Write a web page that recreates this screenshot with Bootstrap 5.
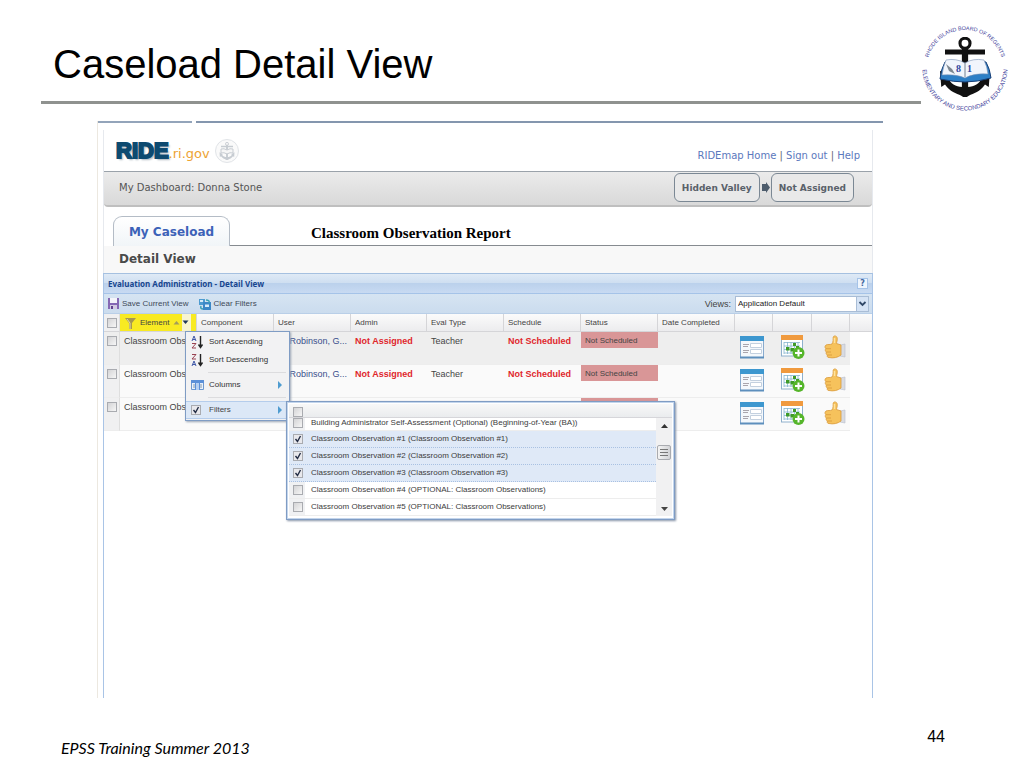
<!DOCTYPE html>
<html lang="en">
<head>
<meta charset="utf-8">
<meta name="viewport" content="width=device-width, initial-scale=1">
<title>Caseload Detail View</title>
<link href="https://cdn.jsdelivr.net/npm/bootstrap@5.3.0/dist/css/bootstrap.min.css" rel="stylesheet">
<style>
body { background:#fff; color:#000; font-family:"Liberation Sans",Arial,sans-serif; }
.slide { min-height:100vh; }
.slide-head { padding:0 16px 0 41px; height:121px; }
.slide-title { font-size:40px; line-height:48px; margin:0; padding:40px 0 13px 12px; border-bottom:3px solid #8f928f; height:104px; }
.seal { width:88px; height:88px; margin:24px -1px 0 0; flex:none; }
.shot { margin:0 141px 0 97px; border-left:1px solid #ece8e0; min-height:577px; }
.shot-line { height:2px; background:linear-gradient(90deg,#93a4ba 94px,#fff 94px 98px,#8496ae 98px); }
.app { margin:7px 10px 0 5px; border:1px solid #e6e9ee; border-top:0; border-bottom:0; font-family:"DejaVu Sans",Verdana,sans-serif; }
.app-head { height:42px; padding:0 12px; border-bottom:1px solid #9aa2aa; }
.brand-main { font:bold 22px/34px "Liberation Sans",sans-serif; color:#0d4a70; -webkit-text-stroke:2px #0d4a70; text-shadow:2px 2px 2px #aab4bc; }
.brand-sub { font-size:13px; line-height:16px; color:#eda333; }
.top-links { font-size:10px; line-height:14px; color:#667; }
.top-links a { color:#5b78bd; text-decoration:none; }
.userbar { height:35px; padding:0 18px 2px 15px; background:linear-gradient(#ebebeb,#d9d9d9); border-bottom:2px solid #bfbfbf; border-radius:0 0 4px 4px; font-size:10px; color:#555; }
.crumb { font:bold 9px/12px "DejaVu Sans",sans-serif; color:#59616a; background:#e9e9e9; border:1px solid #7b8894; border-radius:6px; height:29px; padding:0 7px; }
.tabs-row { height:39px; padding:9px 0 0 9px; }
.tab-on { height:30px; width:117px; font:bold 12px/14px "DejaVu Sans",sans-serif; color:#3c62b8; background:linear-gradient(#fff,#f1f5f8); border:1px solid #b4bcc6; border-bottom:0; border-radius:9px 9px 0 0; }
.tabs-fill { border-bottom:1px solid #868b90; }
.report-title { font:bold 15px/18px "Liberation Serif",serif; color:#000; margin:0; padding-left:81px; padding-top:8px; }
.section-title { font-size:12px; line-height:27px; font-weight:bold; color:#4a4a4a; background:#f8f8f8; margin:0; padding-left:15px; }
.panel { border-top:1px solid #a5c0e0; border-left:1px solid #a9c4e6; border-right:1px solid #a9c4e6; margin:0 -1px; min-height:425px; font:9px/10px "Liberation Sans",Arial,sans-serif; color:#444; }
.panel-title { height:20px; padding:0 4px; background:linear-gradient(#dfeaf6,#cfdff1 45%,#bbd1ec 50%,#c8daf2); border-bottom:1px solid #a5c3e8; font-size:8px; font-weight:bold; color:#17468f; font-family:"Noto Sans",sans-serif; }
.help-btn { width:11px; height:11px; border:1px solid #a5c3e8; background:#eef5fd; color:#44689f; font:bold 8px/9px "DejaVu Sans",sans-serif; padding:0; }
.tools { height:20px; padding:0 3px 0 4px; background:linear-gradient(#d6e4f2,#cbdcee); border-bottom:1px solid #b9cfe8; }
.tool-btn { border:0; background:none; padding:0; color:#3f4a58; font-size:8px; line-height:10px; gap:3px; }
.tool-btn + .tool-btn { margin-left:10px; }
.view-pick { appearance:none; width:134px; height:16px; border:1px solid #a9bdd6; border-radius:0; color:#222; padding:0 14px 0 2px; font-size:8px; line-height:12px;
 background:#fff url("data:image/svg+xml,%3Csvg xmlns='http://www.w3.org/2000/svg' width='12' height='14'%3E%3Crect width='12' height='14' fill='%23d5e3f5'/%3E%3Cpath d='M.5 0v14' stroke='%23a9bdd6'/%3E%3Cpath d='M3.500 5l3 3 3-3' fill='none' stroke='%23304868' stroke-width='1.800'/%3E%3C/svg%3E") right center no-repeat; }
.grid { width:100%; table-layout:fixed; border-collapse:separate; border-spacing:0; }
.grid th { height:18px; padding:0 0 0 4px; font-size:8px; font-weight:normal; white-space:nowrap; background:linear-gradient(#fbfbfb,#ececee); border-right:1px solid #d5d5d8; border-bottom:1px solid #d5d5d8; }
.grid td { height:33px; padding:4px 0 0 4px; vertical-align:top; white-space:nowrap; background:#fafafa; border-bottom:1px solid #ededed; overflow:hidden; }
.grid tr.row-on td { background:#eee; }
.grid tr td.blank { background:#fff; border-color:#fff; }
.grid th.pick, .grid td.pick { padding:4px 0 0 3px; background:#f0f0f1; vertical-align:top; border-right:1px solid #dedede; }
.grid th.sorted { background:linear-gradient(90deg,#f8ea22 62px,#f7f4d0 62px 71px,#f8ea22 71px); padding:0 3px 0 5px; }
.grid td.glyph { padding:3px 0 0 5px; }
.grid a { color:#3a4f8c; text-decoration:none; }
.warn { color:#e0262c; font-weight:bold; }
.flag { background:#d99697; margin:-4px 0 0 -4px; padding:4px 0 2px 4px; height:16px; font-size:8px; }
.tick { appearance:none; display:block; flex:none; width:10px; height:10px; margin:0; border:1px solid #a9abb0; background:linear-gradient(135deg,#d4d4d6,#f6f6f6); }
.tick:checked { background:#e8e8ec url("data:image/svg+xml,%3Csvg xmlns='http://www.w3.org/2000/svg' width='8' height='8'%3E%3Cpath d='M1.500 4l2 2.500L6.500 1' fill='none' stroke='%23222c44' stroke-width='1.400'/%3E%3C/svg%3E") center no-repeat; }
.col-menu { position:absolute; left:81px; top:17px; width:105px; height:90px; border:1px solid #7f9cc4; background:#f2f2f3; box-shadow:1px 1px 2px #9aa5b5; padding:1px 0; z-index:2; font-size:8px; }
.col-menu button { display:flex; align-items:center; width:100%; border:0; background:none; padding:0 7px 0 5px; gap:5px; color:#333; font-size:8px; line-height:10px; height:18px; text-align:left; }
.col-menu .split { height:1px; background:#dcdcde; margin:3px 3px 3px 22px; }
.col-menu .hot { display:flex; align-items:center; gap:8px; background:#dce8f7; height:18px; padding:0 7px 0 5px; border-top:1px solid #b5cdec; border-bottom:1px solid #b5cdec; }
.sub-menu { position:absolute; left:100px; top:69px; width:389px; height:119px; border:1px solid #7f9cc4; outline:1px solid #c3d5ec; outline-offset:-2px; background:#fff; box-shadow:1px 1px 2px #8794a8; z-index:3; padding:2px; }
.sub-head { height:14px; background:linear-gradient(#f8f8f8,#eaecee); border-bottom:1px solid #d6d6da; padding:3px 0 0 4px; }
.choice { height:17px; border-bottom:1px solid #ededed; padding-left:4px; gap:8px; color:#3c3c3c; background:linear-gradient(90deg,#f0f1f3 16px,#fff 16px); }
.choice:first-child { height:13px; align-items:start!important; }
.choice.on { background:#dfe9f7; border-bottom:1px dotted #a9c1e2; }
.bar { width:16px; background:#f1f1f2; padding:4px 0; }
.thumb { width:14px; height:15px; background:linear-gradient(90deg,#f4f4f4,#d2d3d6); border:1px solid #a9abb0; border-radius:2px; }
.slide-foot { padding:27px 79px 0 61px; }
.foot-note { font:italic 16px/24px Lato,sans-serif; padding-top:11px; }
.page-no { font-size:16px; line-height:24px; }
</style>
</head>
<body>
<svg width="0" height="0" class="d-block" aria-hidden="true">
 <symbol id="form" viewBox="0 0 24 24"><rect x=".5" y="1.500" width="23" height="21" fill="#f4f8fc" stroke="#88aace"/><rect y="1" width="24" height="5" fill="#3d97cf"/><path d="M0 22.500h24" stroke="#5d8fbd" stroke-width="2"/><path d="M3 9.500h6M3 11.500h5M3 15.500h6M3 17.500h5" stroke="#a9a5ad"/><path d="M10.500 8.500h11v4h-11zM10.500 14.500h11v4h-11z" fill="#fff" stroke="#c3d0df"/></symbol>
 <symbol id="cal" viewBox="0 0 24 24"><rect x=".5" y="1" width="21" height="20" fill="#fff" stroke="#8fb0cc"/><rect y="0" width="22" height="5" fill="#f09a3e"/><path d="M3 7v12M6.500 7v12M10 7v12M13.500 7v12M17 7v12M3 7.500h16M3 11h16M3 14.500h16M3 18h16" stroke="#87b5cf" stroke-width=".8"/><path d="M12 8h3v3h-3zM15 11h3v3h-3zM5 12h3.500v3.500H5zM9.500 13h3.500v3.500H9.500z" fill="#3f9b28"/><circle cx="17.500" cy="18" r="6" fill="#55b52a"/><path d="M17.500 14.500v7M14 18h7" stroke="#fff" stroke-width="2"/></symbol>
 <symbol id="thumb" viewBox="0 0 22 24"><path d="M16 10l5-1v13l-5-1z" fill="#d8dbe2" stroke="#b9bec9" stroke-width=".6"/><path d="M2 10c2-1 4 0 6-1 1.500-2 1-5 1.200-7 1-2 3.800-1 4 1 .3 3-.7 4-.7 5.500L17 10v10c-3 2.500-8 3.500-12 2.500-2 0-2-1.500-1.500-2.500C2 19.500 1.800 18 2.500 17 1 16.500 1 14.500 1.800 13.700.6 12.500.8 11 2 10z" fill="#f6c25c" stroke="#d9993a" stroke-width=".8"/><path d="M2 13.700h5M2.500 17H7M3.500 20H8" stroke="#d9993a" stroke-width=".8"/><path d="M10.500 3v5" stroke="#ffe3a0" stroke-width="1.500"/></symbol>
 <symbol id="anchor" viewBox="0 0 40 48"><circle cx="20" cy="5" r="4" fill="none" stroke="currentColor" stroke-width="2.500"/><path d="M4 10h32v4H4z"/><path d="M17.500 8h5v32h-5z"/><path d="M0 27l9 6-2 1c3 5 7 6 13 6s10-1 13-6l-2-1 9-6-1 13-3-2c-4 6-9 7-13 9l-3 2-3-2c-4-2-9-3-13-9l-3 2z"/></symbol>
</svg>
<main class="slide d-flex flex-column">
 <header class="slide-head d-flex">
  <h1 class="slide-title flex-grow-1 fw-normal">Caseload Detail View</h1>
  <svg class="seal" viewBox="0 0 88 88" role="img" aria-label="Rhode Island Board of Regents seal">
   <path id="arc-top" d="M6 44A38 38 0 0 1 82 44" fill="none"/>
   <path id="arc-low" d="M1.500 44A42.500 42.500 0 0 0 86.500 44" fill="none"/>
   <g font-family="Liberation Sans" fill="#40409a"><text font-size="5.400" text-anchor="middle"><textPath href="#arc-top" startOffset="50%">RHODE ISLAND BOARD OF REGENTS</textPath></text>
   <text font-size="6" text-anchor="middle"><textPath href="#arc-low" startOffset="50%">ELEMENTARY AND SECONDARY EDUCATION</textPath></text></g>
   <use href="#anchor" x="18" y="13" width="52" height="60" color="#111" fill="#111"/>
   <path d="M24 38q-4 7-5 17 14 3 25 3 12 0 26-4-1-9-5-16-12-2-20 3-9-5-21-3z" fill="#2d7fc6" stroke="#163d75"/>
   <path d="M25 36q-3 7-4 15 14-1 23 3 9-5 23-4-1-8-4-14-11-2-19 3-9-5-19-3z" fill="#f1f5fc" stroke="#7890b4" stroke-width=".6"/><path d="M44 39v14" stroke="#567" stroke-width=".8"/><path d="M25 40l6 5 3 5-6-3z" fill="#7d8791"/>
   <g font-family="Liberation Serif" font-weight="bold" font-size="10" fill="#3046a0"><text x="35" y="48">8</text><text x="46" y="48">1</text></g>
  </svg>
 </header>
 <section class="shot">
  <div class="shot-line"></div>
  <div class="app">
   <div class="app-head d-flex justify-content-between">
    <div class="d-flex"><span class="brand-main pt-1">RIDE</span><span class="brand-sub pt-3">.ri.gov</span>
     <svg class="ms-1 mt-2" width="26" height="26" viewBox="0 0 26 26"><circle cx="13" cy="13" r="11.500" fill="#fafafa" stroke="#e1e4e8"/><use href="#anchor" x="5" y="4" width="16" height="18" fill="#c7ccd2" color="#c7ccd2"/><path d="M7 11q3-1 6 1 3-2 6-1v4q-3-1-6 1-3-2-6-1z" fill="#f6f6f6" stroke="#c7ccd2"/></svg></div>
    <nav class="top-links align-self-end pb-2"><a href="#">RIDEmap Home</a> | <a href="#">Sign out</a> | <a href="#">Help</a></nav>
   </div>
   <div class="userbar d-flex align-items-center justify-content-between"><span>My Dashboard: Donna Stone</span>
    <div class="d-flex align-items-center"><button class="crumb">Hidden Valley</button><svg width="11" height="11" viewBox="0 0 11 11"><path d="M2 2h4V0l4 5.500L6 11V9H2z" fill="#4d5c6c"/></svg><button class="crumb">Not Assigned</button></div>
   </div>
   <div class="tabs-row d-flex"><button class="tab-on">My Caseload</button><div class="tabs-fill flex-grow-1"><h2 class="report-title">Classroom Observation Report</h2></div></div>
   <h3 class="section-title">Detail View</h3>
   <div class="panel">
    <div class="panel-title d-flex align-items-center justify-content-between"><span>Evaluation Administration - Detail View</span><button class="help-btn">?</button></div>
    <div class="tools d-flex align-items-center">
     <button class="tool-btn d-flex align-items-center"><svg width="11" height="11" viewBox="0 0 11 11"><path d="M0 0h11v11H0z" fill="#8568b4"/><path d="M2 0h7v5H2z" fill="#f4f4fa"/><path d="M2 7h7v4H2z" fill="#d3cbe2"/><path d="M3 8h2v3H3z" fill="#62448f"/></svg>Save Current View</button>
     <button class="tool-btn d-flex align-items-center"><svg width="12" height="12" viewBox="0 0 12 12"><path d="M0 1h6v6H0z" fill="#4d9bd0"/><path d="M4 4h8v8H4z" fill="#3c88c6"/><path d="M6 6.500h4v2.500H6z" fill="#d8edfa"/><path d="M7 2q4 0 3 3M4 11Q1 11 2 8" fill="none" stroke="#3ba2b5" stroke-width="1.500"/><path d="M1 2h3v2H1z" fill="#d4ebf8"/></svg>Clear Filters</button>
     <label for="view" class="ms-auto me-1">Views:</label><select id="view" class="view-pick"><option>Application Default</option></select>
    </div>
    <div class="position-relative">
     <table class="grid">
      <colgroup><col style="width:16px"><col style="width:77px"><col style="width:77px"><col style="width:77px"><col style="width:76px"><col style="width:77px"><col style="width:77px"><col style="width:77px"><col style="width:77px"><col style="width:38px"><col style="width:39px"><col style="width:38px"><col></colgroup>
      <thead><tr><th class="pick"><input type="checkbox" class="tick" aria-label="Select all"></th>
       <th class="sorted"><div class="d-flex align-items-center"><svg width="11" height="12" viewBox="0 0 11 12" class="me-1"><path d="M0 1h11L7 6v6H4V6z" fill="#a59750"/><path d="M2 2l3 4v6" stroke="#e3dcaa" fill="none"/></svg>Element<svg width="7" height="5" viewBox="0 0 7 5" class="ms-1"><path d="M3.500 1L6.500 4.500h-6z" fill="#a29c5c"/></svg><svg width="7" height="5" viewBox="0 0 7 5" class="ms-auto me-1"><path d="M.5.5h6L3.500 4z" fill="#20385c"/></svg></div></th>
       <th>Component</th><th>User</th><th>Admin</th><th>Eval Type</th><th>Schedule</th><th>Status</th><th>Date Completed</th><th></th><th></th><th></th><th class="border-end-0"></th></tr></thead>
      <tbody>
       <tr class="row-on"><td class="pick"><input type="checkbox" class="tick" aria-label="Select row 1"></td><td>Classroom Obs...</td><td></td><td class="text-end pe-1"><a href="#">Robinson, G...</a></td><td class="warn">Not Assigned</td><td>Teacher</td><td class="warn">Not Scheduled</td><td><div class="flag">Not Scheduled</div></td><td></td><td class="glyph"><svg width="24" height="24"><use href="#form"/></svg></td><td class="glyph ps-2"><svg width="24" height="24"><use href="#cal"/></svg></td><td class="glyph ps-2"><svg width="30" height="24"><use href="#thumb"/></svg></td><td class="blank"></td></tr>
       <tr><td class="pick"><input type="checkbox" class="tick" aria-label="Select row 2"></td><td>Classroom Obs...</td><td></td><td class="text-end pe-1"><a href="#">Robinson, G...</a></td><td class="warn">Not Assigned</td><td>Teacher</td><td class="warn">Not Scheduled</td><td><div class="flag">Not Scheduled</div></td><td></td><td class="glyph"><svg width="24" height="24"><use href="#form"/></svg></td><td class="glyph ps-2"><svg width="24" height="24"><use href="#cal"/></svg></td><td class="glyph ps-2"><svg width="30" height="24"><use href="#thumb"/></svg></td><td class="blank"></td></tr>
       <tr><td class="pick"><input type="checkbox" class="tick" aria-label="Select row 3"></td><td>Classroom Obs...</td><td></td><td></td><td></td><td></td><td></td><td><div class="flag"></div></td><td></td><td class="glyph"><svg width="24" height="24"><use href="#form"/></svg></td><td class="glyph ps-2"><svg width="24" height="24"><use href="#cal"/></svg></td><td class="glyph ps-2"><svg width="30" height="24"><use href="#thumb"/></svg></td><td class="blank"></td></tr>
      </tbody>
     </table>
     <div class="col-menu">
      <button><svg width="13" height="14" viewBox="0 0 13 14"><path d="M1 6l2-5 2 5M1.800 4.500h2.500" fill="none" stroke="#4059a8"/><path d="M1 8.500h4l-4 4.500h4" fill="none" stroke="#9a4352"/><path d="M9.500 1v11M7.500 9.500l2 3 2-3" fill="none" stroke="#222" stroke-width="1.400"/></svg>Sort Ascending</button>
      <button><svg width="13" height="14" viewBox="0 0 13 14"><path d="M1 1.500h4L1 6h4" fill="none" stroke="#9a4352"/><path d="M1 13l2-5 2 5M1.800 11.500h2.500" fill="none" stroke="#4059a8"/><path d="M9.500 1v11M7.500 9.500l2 3 2-3" fill="none" stroke="#222" stroke-width="1.400"/></svg>Sort Descending</button>
      <div class="split"></div>
      <button><svg width="13" height="10" viewBox="0 0 13 10"><path d="M.5.5h12v9H.5z" fill="#e8f1fb" stroke="#6c98d0"/><path d="M0 0h13v3H0zM8 3h1v7H8zM4 3h1v7H4z" fill="#5b90d8"/><path d="M5 3h3v7H5z" fill="#b5d0f2"/><path d="M2 5h2M2 7h2M9 5h2M9 7h2" stroke="#89a"/></svg>Columns<svg class="ms-auto" width="4" height="8" viewBox="0 0 4 8"><path d="M0 0l4 4-4 4z" fill="#4f9cd0"/></svg></button>
      <div class="split"></div>
      <div class="hot"><input id="filters" type="checkbox" class="tick" checked><label for="filters">Filters</label><svg class="ms-auto" width="4" height="8" viewBox="0 0 4 8"><path d="M0 0l4 4-4 4z" fill="#4f9cd0"/></svg></div>
      <div class="sub-menu">
       <div class="sub-head"><input type="checkbox" class="tick" aria-label="Select all filters"></div>
       <div class="d-flex">
        <div class="flex-grow-1">
         <div class="choice d-flex align-items-center"><input id="f0" type="checkbox" class="tick"><label for="f0">Building Administrator Self-Assessment (Optional) (Beginning-of-Year (BA))</label></div>
         <div class="choice on d-flex align-items-center"><input id="f1" type="checkbox" class="tick" checked><label for="f1">Classroom Observation #1 (Classroom Observation #1)</label></div>
         <div class="choice on d-flex align-items-center"><input id="f2" type="checkbox" class="tick" checked><label for="f2">Classroom Observation #2 (Classroom Observation #2)</label></div>
         <div class="choice on d-flex align-items-center"><input id="f3" type="checkbox" class="tick" checked><label for="f3">Classroom Observation #3 (Classroom Observation #3)</label></div>
         <div class="choice d-flex align-items-center"><input id="f4" type="checkbox" class="tick"><label for="f4">Classroom Observation #4 (OPTIONAL: Classroom Observations)</label></div>
         <div class="choice d-flex align-items-center"><input id="f5" type="checkbox" class="tick"><label for="f5">Classroom Observation #5 (OPTIONAL: Classroom Observations)</label></div>
        </div>
        <div class="bar d-flex flex-column align-items-center justify-content-between"><svg width="7" height="8" viewBox="0 0 7 8"><path d="M3.500 2L7 6H0z" fill="#333"/></svg><div class="thumb d-flex"><svg class="m-auto" width="8" height="8" viewBox="0 0 8 8"><path d="M0 .5h8M0 3.500h8M0 6.500h8" stroke="#777"/></svg></div><span class="py-2"></span><svg width="7" height="5" viewBox="0 0 7 5"><path d="M0 0h7L3.500 4z" fill="#444"/></svg></div>
       </div>
      </div>
     </div>
    </div>
   </div>
  </div>
 </section>
 <footer class="slide-foot d-flex justify-content-between"><span class="foot-note">EPSS Training Summer 2013</span><span class="page-no">44</span></footer>
</main>
<script src="https://cdn.jsdelivr.net/npm/bootstrap@5.3.0/dist/js/bootstrap.bundle.min.js"></script>
</body>
</html>
